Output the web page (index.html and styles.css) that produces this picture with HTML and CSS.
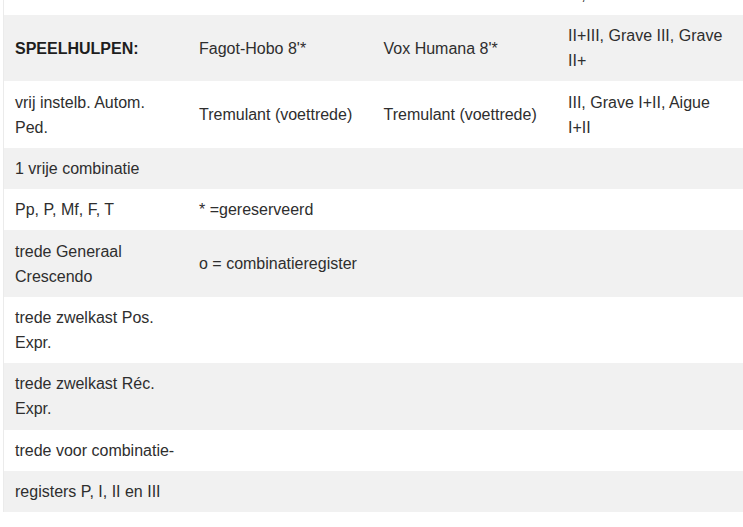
FILE: index.html
```html
<!DOCTYPE html>
<html lang="nl">
<head>
<meta charset="utf-8">
<title>Dispositie</title>
<link rel="stylesheet" href="styles.css">
</head>
<body>
<div class="wrap">
  <table class="disp">
    <colgroup>
      <col class="c">
      <col class="c">
      <col class="c">
      <col>
    </colgroup>
    <tbody>
      <tr class="odd"><td></td><td></td><td></td><td>III,</td></tr>
      <tr class="even"><td><strong>SPEELHULPEN:</strong></td><td>Fagot-Hobo 8'*</td><td>Vox Humana 8'*</td><td>II+III, Grave III, Grave II+</td></tr>
      <tr class="odd"><td>vrij instelb. Autom. Ped.</td><td>Tremulant (voettrede)</td><td>Tremulant (voettrede)</td><td>III, Grave I+II, Aigue I+II</td></tr>
      <tr class="even"><td>1 vrije combinatie</td><td></td><td></td><td></td></tr>
      <tr class="odd"><td>Pp, P, Mf, F, T</td><td>* =gereserveerd</td><td></td><td></td></tr>
      <tr class="even"><td>trede Generaal Crescendo</td><td>o = combinatieregister</td><td></td><td></td></tr>
      <tr class="odd"><td>trede zwelkast Pos. Expr.</td><td></td><td></td><td></td></tr>
      <tr class="even"><td>trede zwelkast Réc. Expr.</td><td></td><td></td><td></td></tr>
      <tr class="odd"><td>trede voor combinatie-</td><td></td><td></td><td></td></tr>
      <tr class="even"><td>registers P, I, II en III</td><td></td><td></td><td></td></tr>
    </tbody>
  </table>
</div>
</body>
</html>
```

FILE: styles.css
```css
html, body {
  margin: 0;
  padding: 0;
  background: #ffffff;
}

.wrap {
  width: 743px;
  height: 527px;
  overflow: hidden;
  padding-left: 3px;
  box-sizing: border-box;
}

.disp {
  margin-top: -26.4px;
  width: 742px;
  table-layout: fixed;
  border-collapse: collapse;
  border-spacing: 0;
  border-left: 1px solid #ebebeb;
  font-family: "Liberation Sans", Arial, sans-serif;
  font-size: 16px;
  line-height: 25px;
  color: #2e2e2e;
}

.disp col.c {
  width: 184.5px;
}

.disp td {
  padding: 8.2px 12px 8.2px 11px;
  vertical-align: middle;
  text-align: left;
}

.disp strong {
  font-weight: bold;
  color: #1e1e1e;
}

.disp tr.even td {
  background: #f1f1f1;
}

.disp tr.odd td {
  background: #ffffff;
}
```
